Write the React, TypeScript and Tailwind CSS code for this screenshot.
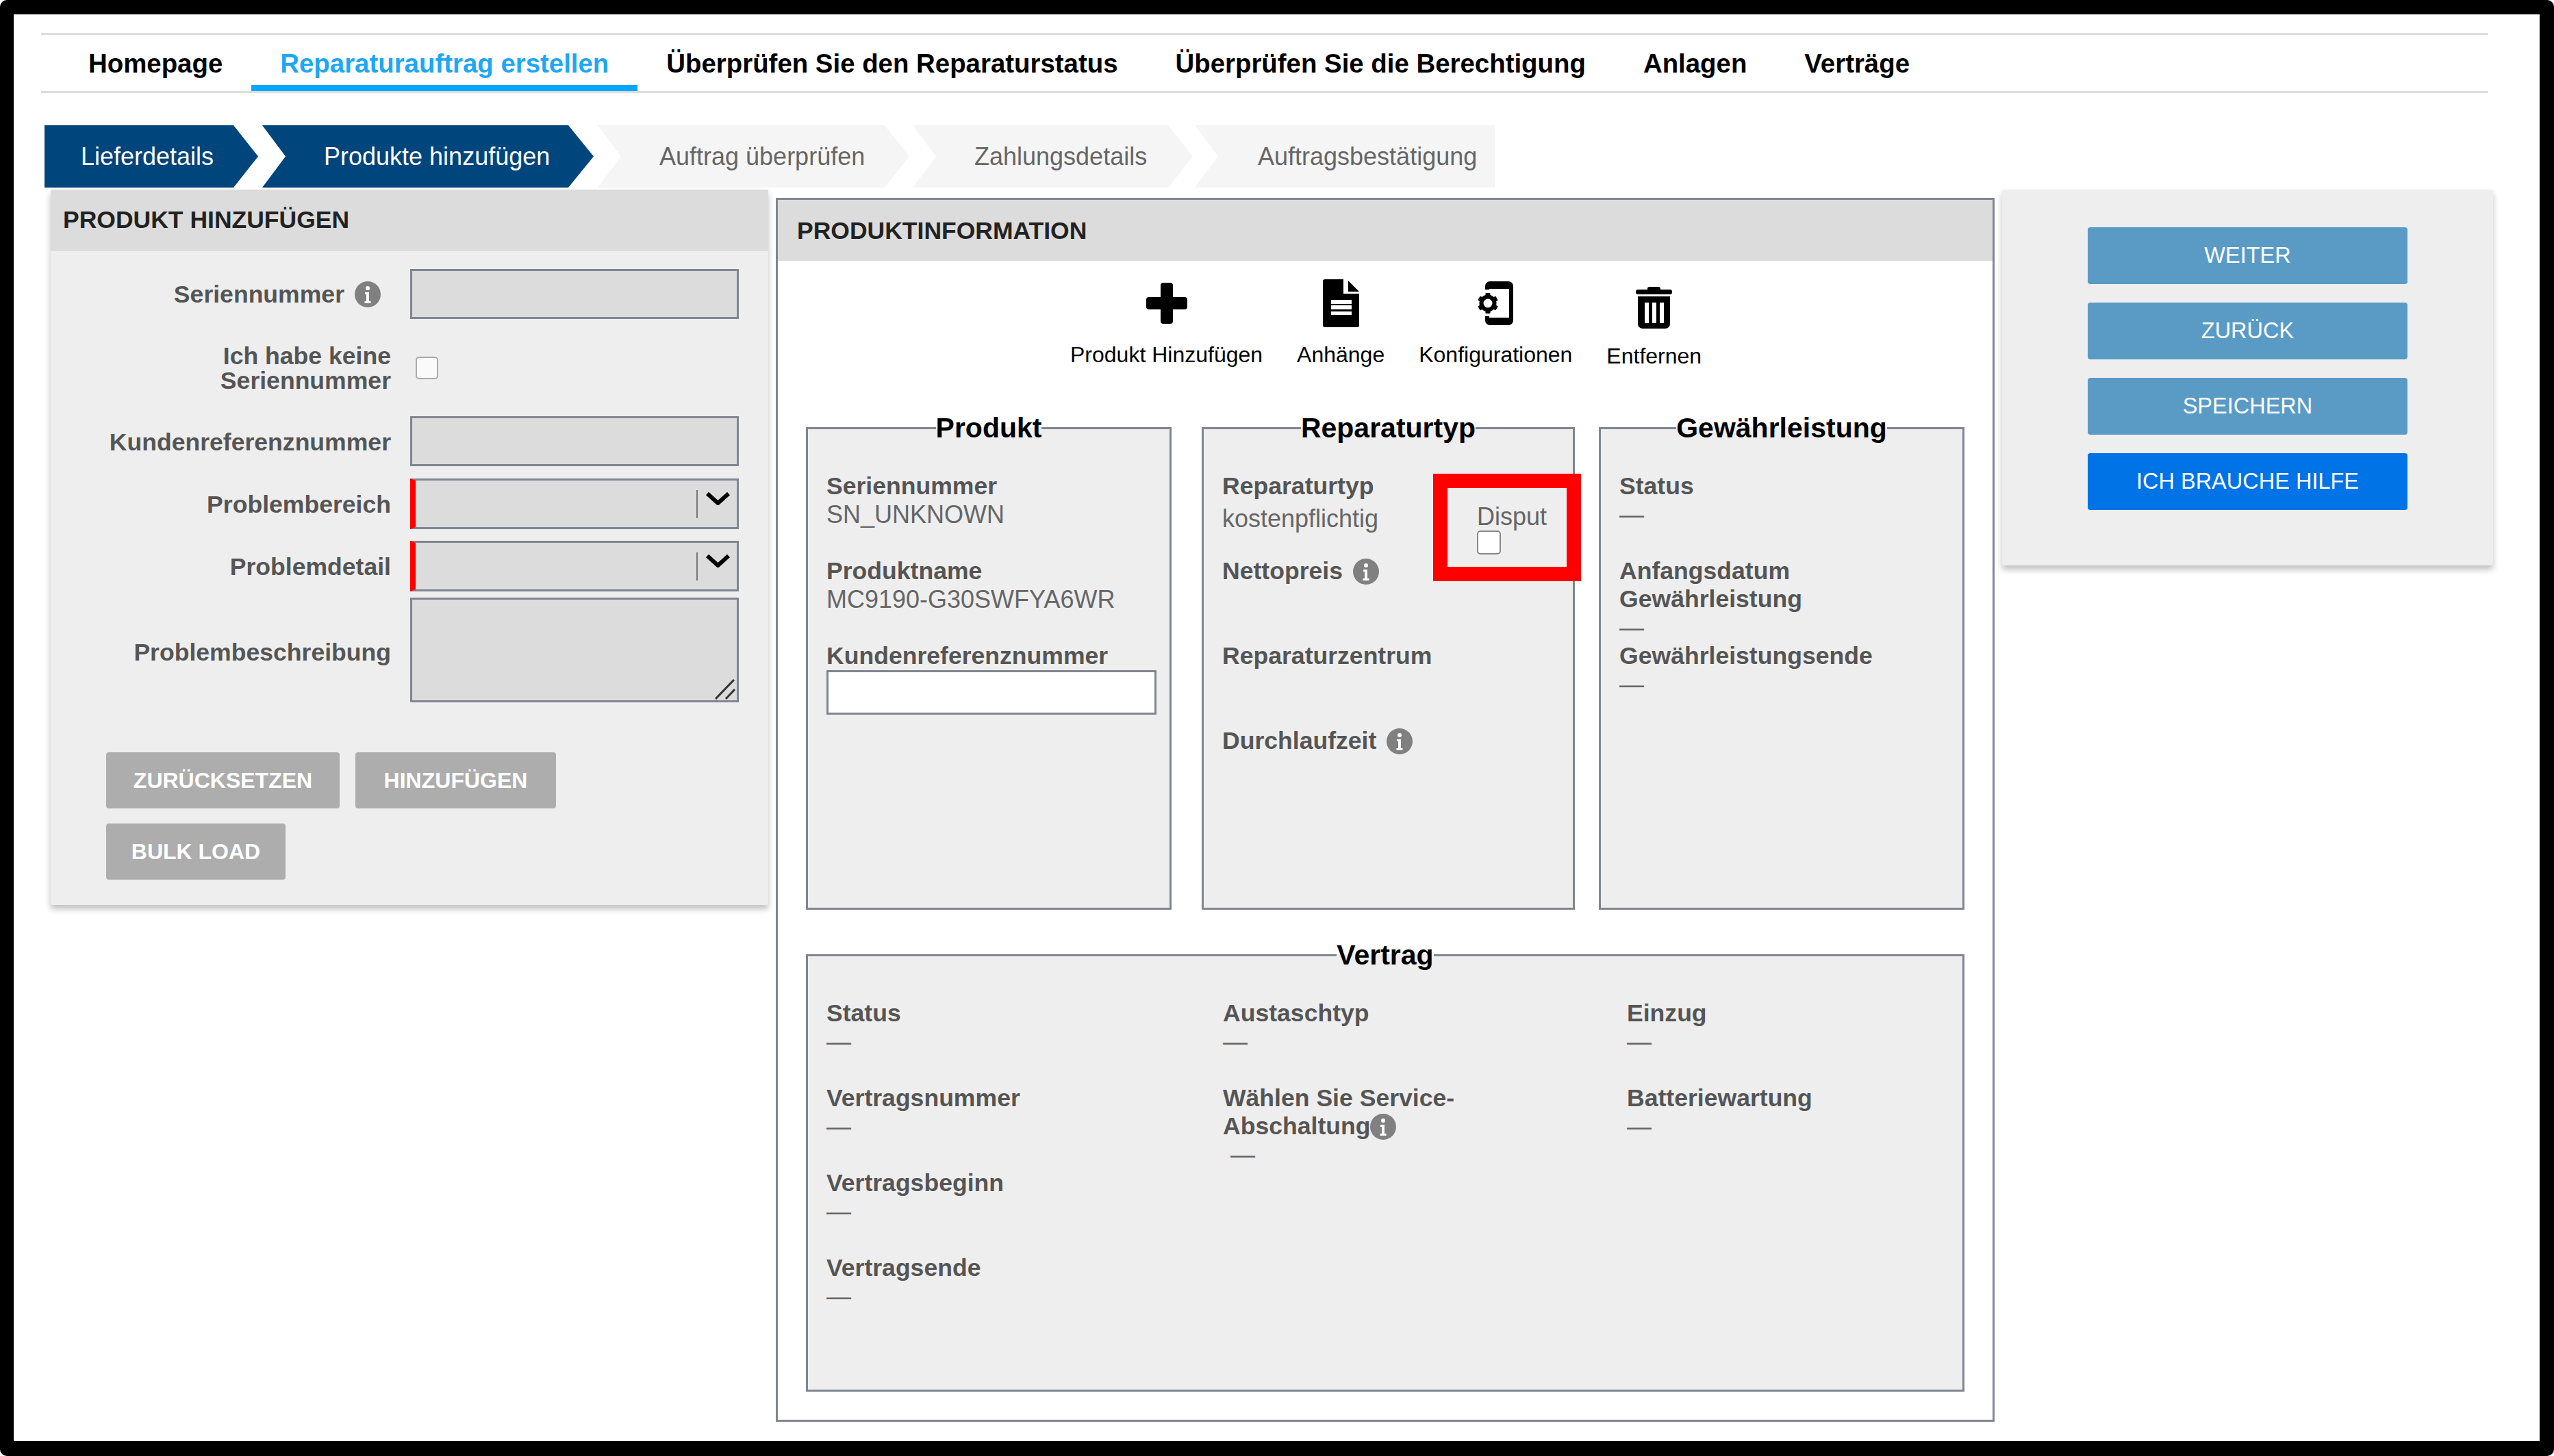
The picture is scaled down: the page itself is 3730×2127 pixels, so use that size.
import React from 'react';

const navItems = ['Homepage', 'Reparaturauftrag erstellen', 'Überprüfen Sie den Reparaturstatus', 'Überprüfen Sie die Berechtigung', 'Anlagen', 'Verträge'];

const InfoIcon = ({ className = '' }: { className?: string }) => (
  <svg viewBox="0 0 38 38" className={`w-[38px] h-[38px] shrink-0 ${className}`}>
    <circle cx="19" cy="19" r="19" fill="#808080" />
    <circle cx="19" cy="10" r="3" fill="#fff" />
    <path d="M15 16h6v13h2.500v3h-9v-3H17v-10h-2z" fill="#fff" />
  </svg>
);

const PlusIcon = () => (
  <svg viewBox="0 0 60 60" className="w-[60px] h-[60px]">
    <rect x="21" y="0" width="18" height="60" rx="4" fill="#000" />
    <rect x="0" y="21" width="60" height="18" rx="4" fill="#000" />
  </svg>
);

const DocIcon = () => (
  <svg viewBox="0 0 53 70" className="w-[53px] h-[70px]">
    <path d="M3 0H30V21H53V67a3 3 0 0 1-3 3H3a3 3 0 0 1-3-3V3a3 3 0 0 1 3-3Z" fill="#000" />
    <path d="M37 2L53 18H37Z" fill="#000" />
    <rect x="12" y="30" width="30" height="6" fill="#fff" />
    <rect x="12" y="38" width="30" height="6" fill="#fff" />
    <rect x="12" y="47" width="30" height="5" fill="#fff" />
  </svg>
);

const DeviceIcon = () => (
  <svg viewBox="0 0 52 64" className="w-[52px] h-[64px]">
    <path d="M11 12V7a7 7 0 0 1 7-7H45a7 7 0 0 1 7 7V57a7 7 0 0 1-7 7H18a7 7 0 0 1-7-7V51H17V53H46V11H17V12Z" fill="#000" />
    {[0, 60, 120, 180, 240, 300].map((a) => (
      <rect key={a} x="11.500" y="17" width="7" height="7" rx="1" fill="#000" transform={`rotate(${a} 15 32)`} />
    ))}
    <circle cx="15" cy="32" r="9.500" fill="#fff" stroke="#000" strokeWidth="6" />
  </svg>
);

const TrashIcon = () => (
  <svg viewBox="0 0 53 61" className="w-[53px] h-[61px] mt-[13px]">
    <rect x="17" y="0" width="19" height="8" rx="3" fill="#000" />
    <rect x="0" y="4" width="53" height="7" rx="3" fill="#000" />
    <path d="M3 14H50V54a7 7 0 0 1-7 7H10a7 7 0 0 1-7-7Z" fill="#000" />
    <rect x="13" y="23" width="6" height="30" fill="#fff" />
    <rect x="24" y="23" width="6" height="30" fill="#fff" />
    <rect x="35" y="23" width="6" height="30" fill="#fff" />
  </svg>
);

const Chevron = () => (
  <svg viewBox="0 0 37 19" className="w-[37px] h-[19px]">
    <path d="M3 2L18.500 16L34 2" fill="none" stroke="#000" strokeWidth="6" />
  </svg>
);

const Label = ({ children }: { children: React.ReactNode }) => (
  <div className="text-[35.600px] leading-[41px] font-bold text-[#555]">{children}</div>
);

const Value = ({ children }: { children: React.ReactNode }) => (
  <div className="text-[36px] leading-[41px] text-[#666]">{children}</div>
);

const Item = ({ label, value }: { label: React.ReactNode; value?: React.ReactNode }) => (
  <div className="h-[124px]">
    <Label>{label}</Label>
    {value && <Value>{value}</Value>}
  </div>
);

const Box = ({ title, className, children }: { title: string; className: string; children: React.ReactNode }) => (
  <fieldset className={`border-[3px] border-[#808590] bg-[#eeeeee] ${className}`}>
    <legend className="mx-auto text-[41px] leading-[46px] font-bold text-black">{title}</legend>
    <div className="pt-[42px] pl-[27px]">{children}</div>
  </fieldset>
);

const Field = ({ label, className = '', children }: { label: React.ReactNode; className?: string; children: React.ReactNode }) => (
  <div className={`flex items-center ${className}`}>
    <div className="w-[497px] pt-[2px] flex items-center justify-end text-right text-[35.600px] leading-[36px] font-bold text-[#555]">{label}</div>
    <div className="ml-[28px]">{children}</div>
  </div>
);

const TextInput = () => (
  <input type="text" className="block w-[480px] h-[73px] bg-[#dcdcdc] border-[3px] border-[#808590]" />
);

const SelectBox = () => (
  <div className="w-[480px] h-[74px] bg-[#dcdcdc] border-[3px] border-l-[8px] border-[#808590] border-l-[#ff0000] flex items-center justify-end">
    <div className="w-[2px] h-[41px] bg-[#777]" />
    <div className="ml-[11px] mr-[9px] mb-[16px] flex"><Chevron /></div>
  </div>
);

const GrayButton = ({ label, className }: { label: string; className: string }) => (
  <button className={`h-[82px] rounded-[4px] bg-[#adadad] text-white text-[32px] font-bold ${className}`}>{label}</button>
);

const BlueButton = ({ label, className = 'bg-[#5a9bc6]' }: { label: string; className?: string }) => (
  <button className={`w-[467px] h-[83px] rounded-[4px] text-white text-[32.500px] ${className}`}>{label}</button>
);

const ToolItem = ({ icon, label, className = '' }: { icon: React.ReactNode; label: string; className?: string }) => (
  <div className="flex flex-col items-center">
    <div className="h-[72px] flex items-center justify-center">{icon}</div>
    <div className={`mt-[19px] text-[32px] leading-[40px] text-black ${className}`}>{label}</div>
  </div>
);

export default function App() {
  return (
    <div className="w-[3730px] h-[2127px] bg-black pt-[21px] pl-[20px] pr-[21px] pb-[22px] rounded-[10px] [font-family:'Liberation_Sans',sans-serif]">
      <div className="w-full h-full bg-white overflow-hidden">
        <div className="mt-[27px] ml-[40px] w-[3574px] h-[88px] border-y-[3px] border-[#dddddd] flex pl-[27px]">
          {navItems.map((item, i) => (
            <div
              key={item}
              className={`h-[82px] px-[42px] flex items-center text-[38.400px] font-bold ${i === 1 ? 'pt-[11px] text-[#1ea7f5] border-b-[9px] border-[#00a6ff]' : 'pt-[2px] text-black'}`}
            >
              {item}
            </div>
          ))}
        </div>

        <div className="mt-[47px] ml-[45px] flex h-[91px] text-[36px]">
          <div className="w-[312px] pl-[53px] flex items-center bg-[#00457c] text-white [clip-path:polygon(0_0,276px_0,100%_50%,276px_100%,0_100%)]">Lieferdetails</div>
          <div className="ml-[6px] w-[484px] pl-[90px] flex items-center bg-[#00457c] text-white [clip-path:polygon(0_0,447px_0,100%_50%,447px_100%,0_100%,34px_50%)]">Produkte hinzufügen</div>
          <div className="ml-[6px] w-[455px] pl-[90px] flex items-center bg-[#f5f5f5] text-[#666] [clip-path:polygon(0_0,419px_0,100%_50%,419px_100%,0_100%,34px_50%)]">Auftrag überprüfen</div>
          <div className="ml-[5px] w-[409px] pl-[90px] flex items-center bg-[#f5f5f5] text-[#666] [clip-path:polygon(0_0,373px_0,100%_50%,373px_100%,0_100%,34px_50%)]">Zahlungsdetails</div>
          <div className="ml-[3px] w-[438px] pl-[92px] flex items-center bg-[#f5f5f5] text-[#666] [clip-path:polygon(0_0,100%_0,100%_100%,0_100%,34px_50%)]">Auftragsbestätigung</div>
        </div>

        <div className="mt-[3px] ml-[54px] flex items-start">
          <div className="w-[1048px] h-[1045px] bg-[#eeeeee] shadow-[0_6px_10px_rgba(0,0,0,0.25)] rounded-[3px]">
            <div className="h-[90px] bg-[#dcdcdc] flex items-center pl-[18px] text-[35.500px] font-bold text-[#222]">PRODUKT HINZUFÜGEN</div>
            <Field className="mt-[26px]" label={<div className="flex items-center pr-[15px] gap-[15px] -mt-[2px]">Seriennummer <InfoIcon /></div>}>
              <TextInput />
            </Field>
            <Field className="mt-[34px]" label={<div>Ich habe keine<br />Seriennummer</div>}>
              <input type="checkbox" className="block appearance-none ml-[8px] w-[33px] h-[33px] rounded-[5px] border-[2px] border-[#aaa] bg-[#fafafa]" />
            </Field>
            <Field className="mt-[34px]" label="Kundenreferenznummer"><TextInput /></Field>
            <Field className="mt-[18px]" label="Problembereich"><SelectBox /></Field>
            <Field className="mt-[17px]" label="Problemdetail"><SelectBox /></Field>
            <Field className="mt-[9px]" label={<div className="pt-[5px]">Problembeschreibung</div>}>
              <div className="relative w-[480px] h-[153px] bg-[#dcdcdc] border-[3px] border-[#808590]">
                <svg viewBox="0 0 30 30" className="absolute right-[2px] bottom-[1px] w-[30px] h-[30px]">
                  <path d="M1 29L28 1M16 29L29 15" stroke="#333" strokeWidth="3" fill="none" />
                </svg>
              </div>
            </Field>
            <div className="mt-[73px] ml-[81px] flex gap-[23px]">
              <GrayButton label="ZURÜCKSETZEN" className="w-[341px]" />
              <GrayButton label="HINZUFÜGEN" className="w-[293px]" />
            </div>
            <div className="mt-[22px] ml-[81px]">
              <GrayButton label="BULK LOAD" className="w-[262px]" />
            </div>
          </div>

          <div className="ml-[11px] mt-[12px] w-[1780px] h-[1788px] border-[3px] border-[#808590] bg-white">
            <div className="h-[89px] bg-[#dcdcdc] flex items-center pl-[28px] pt-[2px] text-[35.500px] font-bold text-[#222]">PRODUKTINFORMATION</div>
            <div className="mt-[26px] pl-[427px] flex gap-[50px]">
              <ToolItem icon={<PlusIcon />} label="Produkt Hinzufügen" />
              <ToolItem icon={<DocIcon />} label="Anhänge" />
              <ToolItem icon={<DeviceIcon />} label="Konfigurationen" />
              <ToolItem icon={<TrashIcon />} label="Entfernen" className="mt-[21px]" />
            </div>
            <div className="mt-[62px] ml-[41px] flex">
              <Box title="Produkt" className="w-[534px] h-[727px]">
                <Item label="Seriennummer" value="SN_UNKNOWN" />
                <Item label="Produktname" value="MC9190-G30SWFYA6WR" />
                <Label>Kundenreferenznummer</Label>
                <input type="text" className="block w-[482px] h-[65px] bg-white border-[3px] border-[#808590]" />
              </Box>
              <Box title="Reparaturtyp" className="ml-[44px] w-[545px] h-[727px]">
                <div className="h-[124px] flex">
                  <div className="w-[372px]">
                    <Label>Reparaturtyp</Label>
                    <div className="mt-[6px]"><Value>kostenpflichtig</Value></div>
                  </div>
                  <div className="relative mt-[44px] h-[77px]">
                    <div className="text-[36px] leading-[41px] text-[#666]">Disput</div>
                    <input type="checkbox" className="block appearance-none w-[35px] h-[35px] rounded-[5px] border-[2px] border-[#888] bg-white" />
                    <div className="absolute left-[-64px] top-[-42px] w-[216px] h-[157px] border-[21px] border-[#ff0000]" />
                  </div>
                </div>
                <Item label={<span className="flex items-center gap-[15px]">Nettopreis <InfoIcon /></span>} />
                <Item label="Reparaturzentrum" />
                <Item label={<span className="flex items-center gap-[15px]">Durchlaufzeit <InfoIcon /></span>} />
              </Box>
              <Box title="Gewährleistung" className="ml-[35px] w-[534px] h-[727px]">
                <Item label="Status" value="—" />
                <Item label={<>Anfangsdatum<br />Gewährleistung</>} value="—" />
                <Item label="Gewährleistungsende" value="—" />
              </Box>
            </div>
            <div className="mt-[43px] ml-[41px]">
              <Box title="Vertrag" className="w-[1692px] h-[661px]">
                <div className="flex">
                  <div className="w-[579px]">
                    <Item label="Status" value="—" />
                    <Item label="Vertragsnummer" value="—" />
                    <Item label="Vertragsbeginn" value="—" />
                    <Item label="Vertragsende" value="—" />
                  </div>
                  <div className="w-[590px]">
                    <Item label="Austaschtyp" value="—" />
                    <Label>Wählen Sie Service-<br /><span className="inline-flex items-center">Abschaltung<InfoIcon /></span></Label>
                    <div className="pl-[11px]"><Value>—</Value></div>
                  </div>
                  <div>
                    <Item label="Einzug" value="—" />
                    <Item label="Batteriewartung" value="—" />
                  </div>
                </div>
              </Box>
            </div>
          </div>

          <div className="ml-[11px] w-[717px] h-[549px] bg-[#eeeeee] shadow-[0_6px_10px_rgba(0,0,0,0.25)] rounded-[3px] pt-[55px] pl-[125px] flex flex-col gap-[27px]">
            <BlueButton label="WEITER" />
            <BlueButton label="ZURÜCK" />
            <BlueButton label="SPEICHERN" />
            <BlueButton label="ICH BRAUCHE HILFE" className="bg-[#0073e6]" />
          </div>
        </div>
      </div>
    </div>
  );
}
